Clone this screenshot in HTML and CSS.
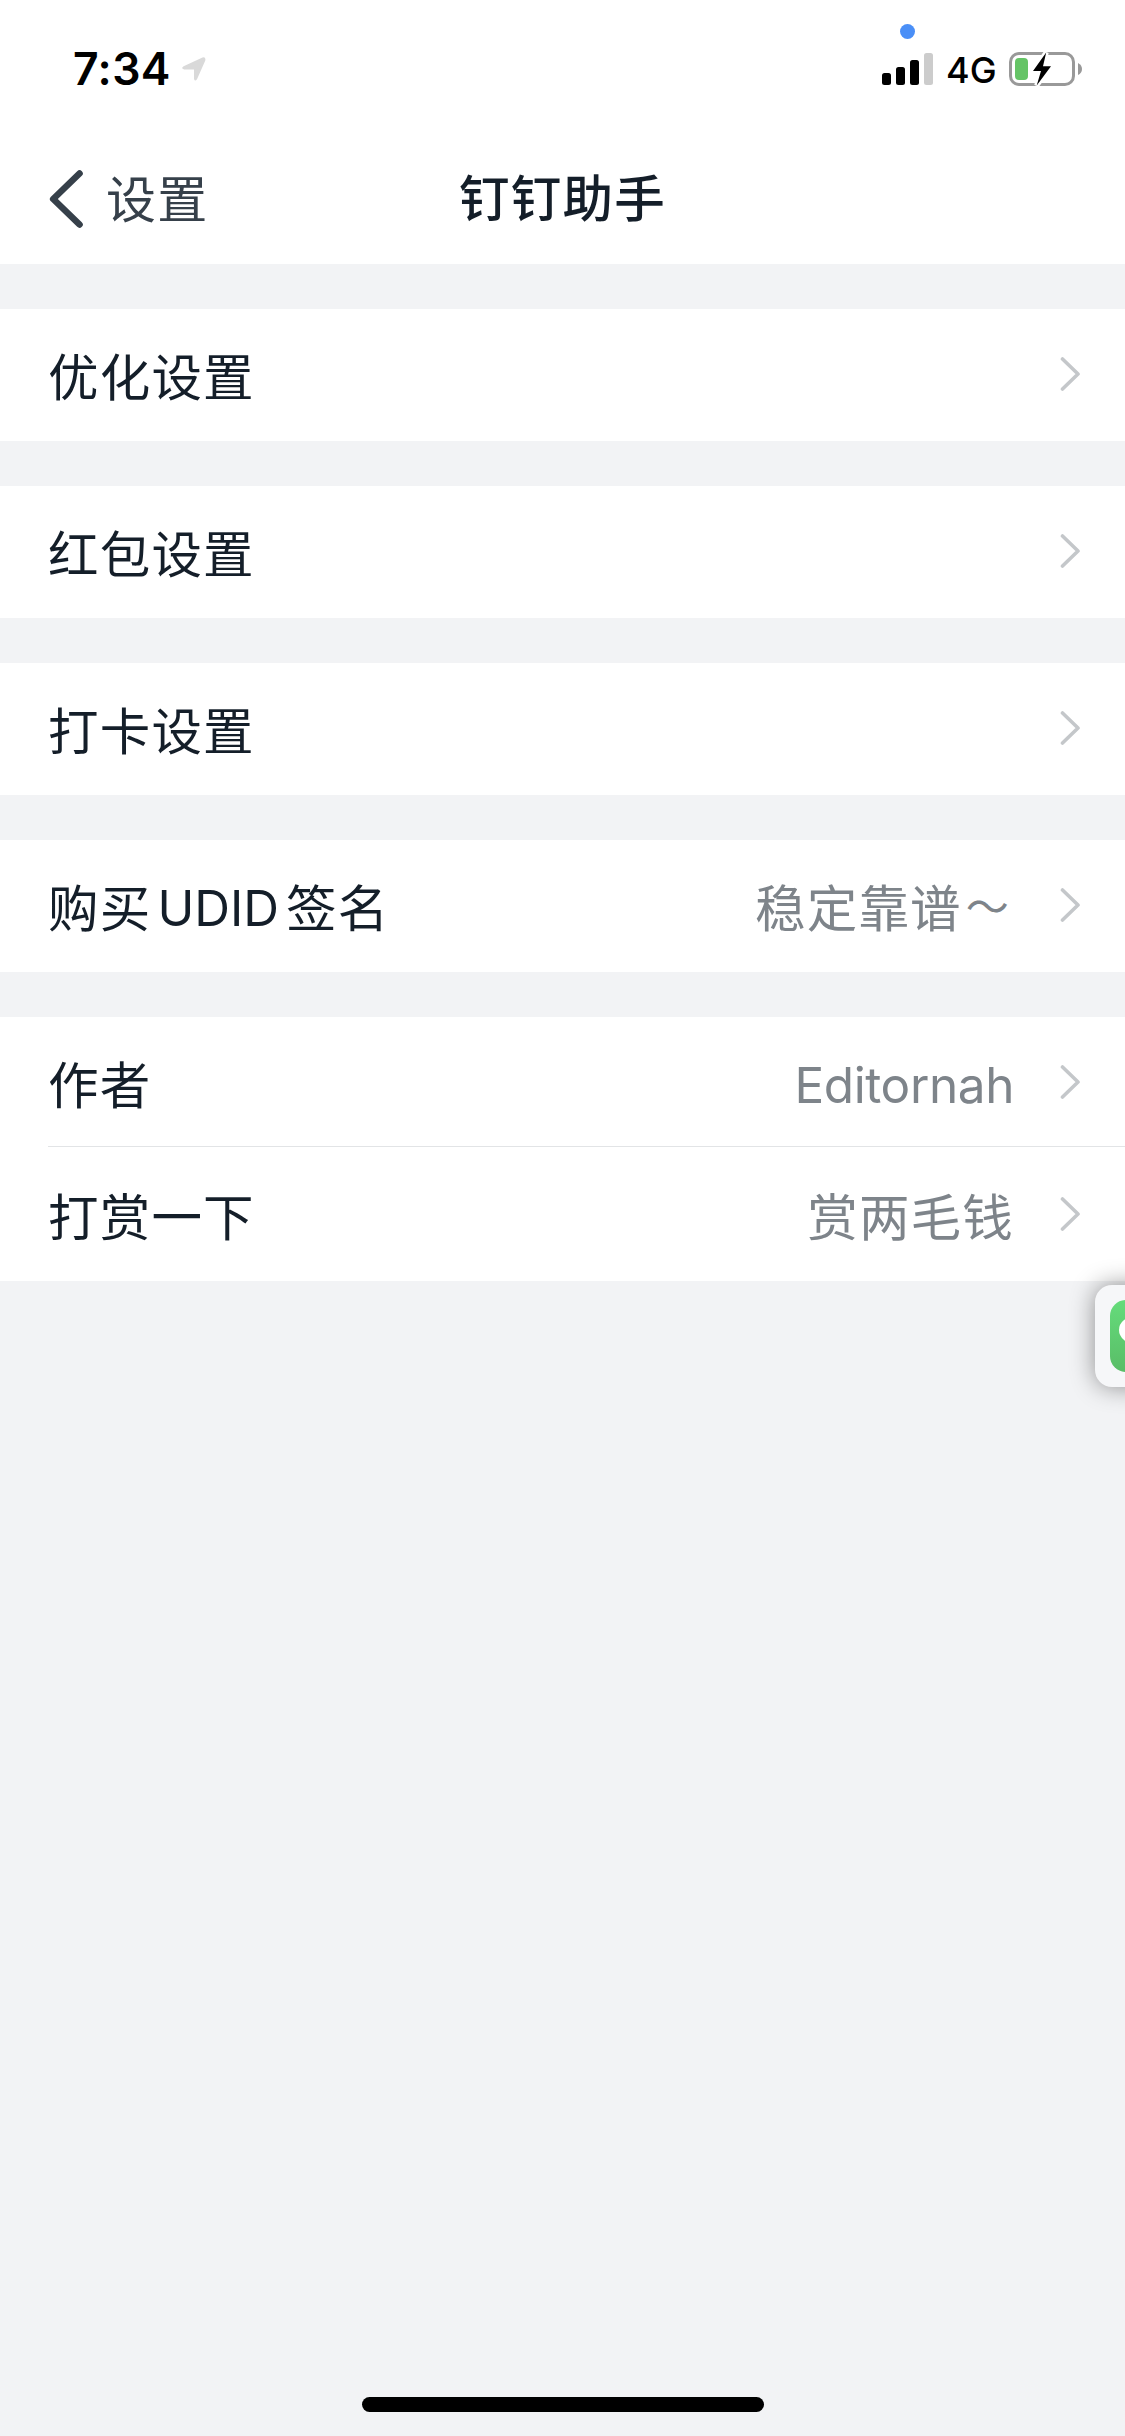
FILE: index.html
```html
<!DOCTYPE html>
<html lang="zh-CN">
<head>
<meta charset="utf-8">
<title>钉钉助手</title>
<link rel="stylesheet" href="styles.css">
</head>
<body>
<svg class="defs" width="0" height="0">
  <symbol id="chevron" viewBox="0 0 20 34"><path d="M2.5 2 L18 17 L2.5 32" fill="none" stroke="#c4c7ca" stroke-width="3.6" stroke-linecap="round" stroke-linejoin="round"/></symbol>
</svg>
<div class="screen">
  <header class="top">
    <div class="status">
      <span class="time">7:34</span>
      <svg class="location" width="24" height="24" viewBox="0 0 24 24"><path d="M1.6 9.2 L20.5 .4 Q24 -.3 23.3 3.5 L15 22.2 Q13 25 12 22 V12.5 H2.2 Q-1.6 11.3 1.6 9.2Z" fill="#d9d9d9"/></svg>
      <svg class="signal" width="51" height="32" viewBox="0 0 51 32">
        <rect x="0" y="20" width="9" height="12" rx="2.5"/><rect x="14" y="14" width="9" height="18" rx="2.5"/><rect x="28" y="7" width="9" height="25" rx="2.5"/><rect x="42" y="0" width="9" height="32" rx="2.5" fill="#ccc"/>
      </svg>
      <span class="network">4G</span>
      <svg class="battery" width="74" height="36" viewBox="0 0 74 36">
        <rect x="1.5" y="2.5" width="63" height="31" rx="8.5" fill="none" stroke="#999" stroke-width="3"/>
        <path d="M69 12 Q73 14 73 18 Q73 22 69 24Z" fill="#999"/>
        <rect x="6" y="7" width="13" height="22" rx="4" fill="#65c466"/>
        <path d="M37.2 1.5 L24 20 H32 L27.7 34.5 L42 15.2 H34Z" stroke="#fff" stroke-width="5"/>
        <path d="M37.2 1.5 L24 20 H32 L27.7 34.5 L42 15.2 H34Z"/>
      </svg>
      <i class="dot"></i>
    </div>
    <nav class="nav">
      <div class="back">
        <svg width="36" height="60" viewBox="0 0 36 60"><path d="M31.5 3.5 L5.2 29 L31.5 54.5" fill="none" stroke="#36404a" stroke-width="6.6" stroke-linecap="round" stroke-linejoin="round"/></svg>
        <span>设置</span>
      </div>
      <h1>钉钉助手</h1>
      <div></div>
    </nav>
  </header>
  <main class="groups">
    <section class="group"><div class="row"><span class="label">优化设置</span><svg class="chev"><use href="#chevron"/></svg></div></section>
    <section class="group"><div class="row"><span class="label">红包设置</span><svg class="chev"><use href="#chevron"/></svg></div></section>
    <section class="group"><div class="row"><span class="label">打卡设置</span><svg class="chev"><use href="#chevron"/></svg></div></section>
    <section class="group"><div class="row"><span class="label">购买<span class="latin udid">UDID</span>签名</span><span class="value">稳定靠谱<span class="tilde">～</span></span><svg class="chev"><use href="#chevron"/></svg></div></section>
    <section class="group">
      <div class="row divided"><span class="label">作者</span><span class="value latin author">Editornah</span><svg class="chev"><use href="#chevron"/></svg></div>
      <div class="row"><span class="label">打赏一下</span><span class="value">赏两毛钱</span><svg class="chev"><use href="#chevron"/></svg></div>
    </section>
  </main>
  <div class="floating">
    <svg width="15" height="72" viewBox="0 0 15 72"><defs><linearGradient id="g" x2="0" y2="1"><stop stop-color="#65dc7b"/><stop offset="1" stop-color="#59bd67"/></linearGradient></defs><rect width="72" height="72" rx="16" fill="url(#g)"/><ellipse cx="26" cy="30" rx="17" ry="14" fill="#fff"/></svg>
  </div>
  <div class="home"></div>
</div>
</body>
</html>
```
FILE: styles.css
```css
* { box-sizing: border-box; }
body { margin: 0; }
.defs { position: absolute; }
.screen {
  position: relative;
  display: flex;
  flex-direction: column;
  width: 1125px;
  height: 2436px;
  overflow: hidden;
  background: #f2f3f5;
  color: #141e29;
  font-family: "Noto Sans CJK SC", sans-serif;
  font-size: 50.5px;
  letter-spacing: 1.2px;
}
.top { height: 264px; background: #fff; }
.status {
  position: relative;
  display: flex;
  align-items: center;
  height: 138px;
  padding: 0 42px 0 73px;
  font-family: Inter, sans-serif;
  color: #000;
  letter-spacing: 0;
}
.time { width: 109px; font-size: 44.5px; font-weight: 600; letter-spacing: .4px; }
.location { margin-right: auto; }
.signal { margin-right: 13px; }
.network { width: 63px; padding-top: 2px; font-size: 36px; font-weight: 450; }
.dot {
  position: absolute;
  left: 900px;
  top: 24px;
  width: 15px;
  height: 15px;
  border-radius: 50%;
  background: #4a8ff7;
}
.nav {
  display: grid;
  grid-template-columns: 1fr auto 1fr;
  align-items: center;
  height: 126px;
  padding: 0 48px 3px;
}
.back { display: flex; align-items: center; gap: 22px; color: #36404a; line-height: 74px; }
.back span { padding-bottom: 8px; font-size: 50px; }
h1 { margin: 0; padding-bottom: 9px; font-size: 50.5px; font-weight: 500; line-height: 74px; }
.groups { display: flex; flex-direction: column; gap: 45px; padding-top: 45px; }
.group { background: #fff; }
.row {
  display: flex;
  align-items: center;
  height: 132px;
  padding: 0 45px 2px 48px;
  line-height: 74px;
}
.divided {
  background: linear-gradient(#e2e4e6, #e2e4e6) 48px 129px / 100% 1px no-repeat;
}
.label { margin-right: auto; }
.latin { font-family: Inter, sans-serif; font-size: 49.5px; letter-spacing: -.4px; }
.udid { margin: 0 7px 0 6px; line-height: 0; letter-spacing: 0; vertical-align: 1px; }
.author { padding-top: 6px; }
.value { color: #7e848a; }
.tilde { padding: 0 4px; font-size: 43px; line-height: 0; vertical-align: 4px; }
.chev { width: 20px; height: 34px; margin-left: 46px; }
.floating {
  position: absolute;
  left: 1095px;
  top: 1285px;
  width: 102px;
  height: 102px;
  padding: 15px;
  border-radius: 17px;
  background: #f6f7f9;
  box-shadow: 0 0 24px rgba(0, 0, 0, .42);
}
.floating svg { display: block; }
.home {
  width: 402px;
  height: 15px;
  margin: auto auto 24px 362px;
  border-radius: 8px;
  background: #000;
}
```
